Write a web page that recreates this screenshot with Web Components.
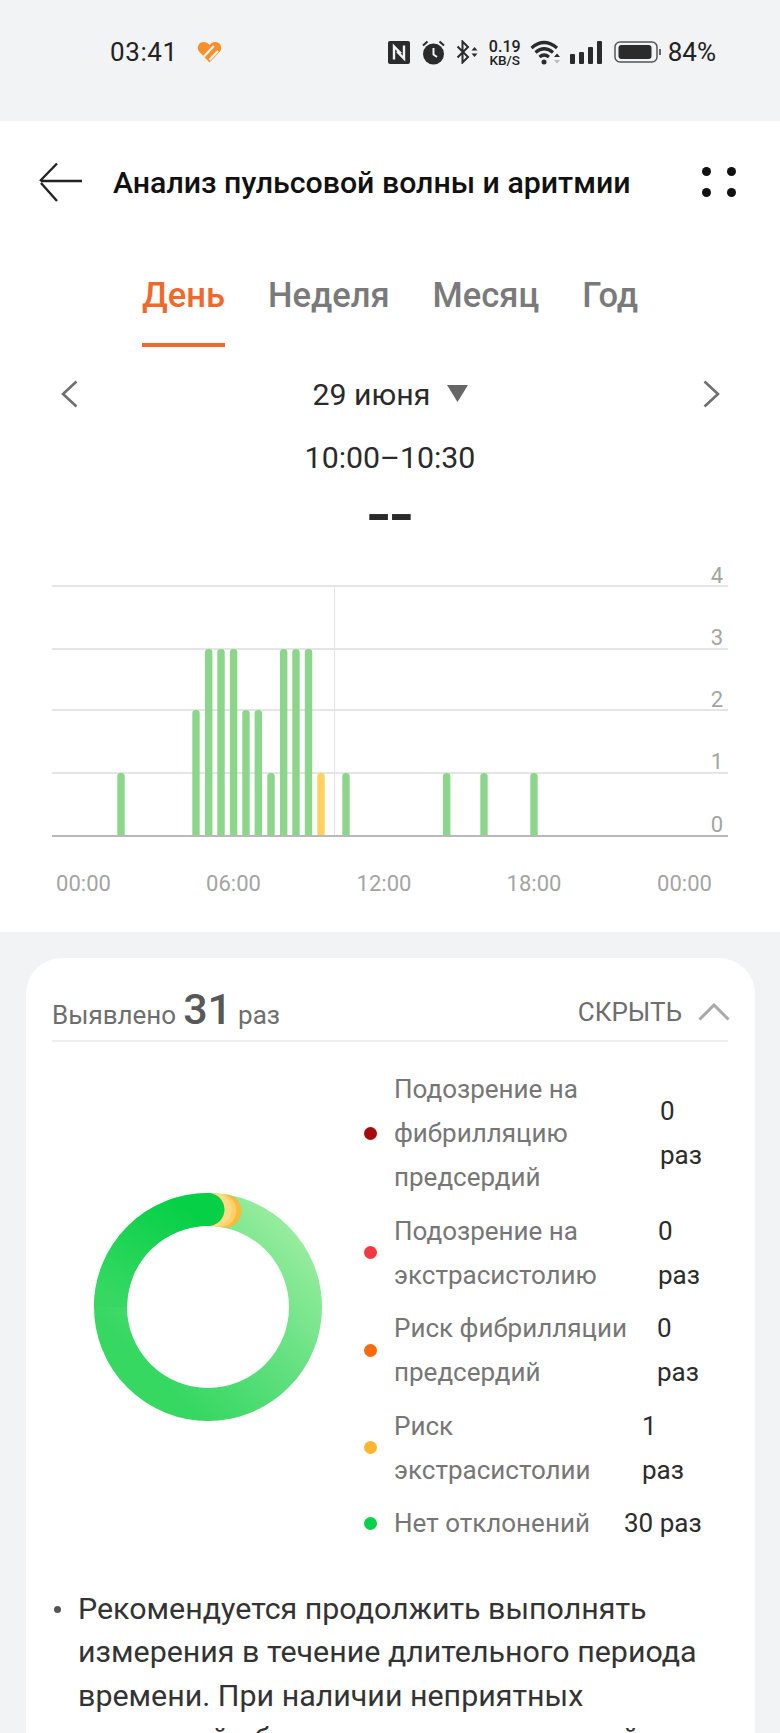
<!DOCTYPE html>
<html lang="ru">
<head>
<meta charset="utf-8">
<title>Анализ пульсовой волны и аритмии</title>
<style>
    html, body{
        margin: 0;
        height: 1733px;
        overflow: hidden;
        background: #f1f3f5;
        font-family: Roboto, "Liberation Sans", sans-serif;
    }
</style>
</head>
<body>
<status-bar></status-bar>
<div style="background:#fff">
    <app-header>Анализ пульсовой волны и аритмии</app-header>
    <period-tabs></period-tabs>
    <date-nav></date-nav>
    <pulse-chart></pulse-chart>
</div>
<result-card>
    <legend-row color="#a80a0a" label="Подозрение на фибрилляцию предсердий" text-width="266" value="0 раз" value-width="42"></legend-row>
    <legend-row color="#f4383f" label="Подозрение на экстрасистолию" text-width="264" value="0 раз" value-width="42"></legend-row>
    <legend-row color="#fb6a0c" label="Риск фибрилляции предсердий" text-width="263" value="0 раз" value-width="42"></legend-row>
    <legend-row color="#fdb62f" label="Риск экстрасистолии" text-width="248" value="1 раз" value-width="42"></legend-row>
    <legend-row color="#0ad14a" label="Нет отклонений" text-width="230" value="30 раз" value-width="90"></legend-row>
    <p slot="advice">Рекомендуется продолжить выполнять измерения в течение длительного периода времени. При наличии неприятных ощущений обратитесь за медицинской помощью.</p>
</result-card>

<script>
class StatusBar extends HTMLElement{
    constructor(){
        super();
        this.attachShadow({mode: 'open'});
        this.shadowRoot.innerHTML = `
            <style>
                :host{
                    display: flex;
                    align-items: center;
                    height: 121px;
                    box-sizing: border-box;
                    padding: 0 64px 17px 110px;
                    background: #f1f3f5;
                    color: #222;
                }
                .time{ font-size: 26px; letter-spacing: .6px; }
                .heart{ margin-left: 19px; }
                .right{ margin-left: auto; display: flex; align-items: center; }
                svg{ display: block; }
                .speed{
                    display: flex;
                    flex-direction: column;
                    align-items: center;
                    width: 32px;
                    margin: 0 9px 0 10px;
                    font-weight: 500;
                }
                .speed b{ font-size: 16px; font-weight: 500; line-height: 15px; }
                .speed i{ font-size: 13.500px; font-style: normal; line-height: 12px; }
                .pct{ font-size: 26px; margin-left: 6px; }
            </style>
            <span class="time">03:41</span>
            <svg class="heart" width="25" height="22" viewBox="0 0 25 22">
                <path d="M12.500 21.500 2 10.500C-1 6.500 2 1 6.500 1c2.500 0 4.500 1 6 3 1.500-2 3.500-3 6-3C23 1 26 6.500 23 10.500z" fill="#f7902b"/>
                <path d="M7 15.500 16.800 5M12.500 19 21 10" stroke="#f1f3f5" stroke-width="2.200" fill="none"/>
            </svg>
            <div class="right">
                <svg width="22" height="23" viewBox="0 0 22 23">
                    <rect width="22" height="23" rx="2" fill="#2b2b2b"/>
                    <path d="M6 18.500V5.500l7 7M16 4.500v13l-7-7" stroke="#f1f3f5" stroke-width="2.400" fill="none"/>
                </svg>
                <svg style="margin-left:11px" width="25" height="25" viewBox="0 0 25 25">
                    <circle cx="12.500" cy="14" r="10.500" fill="#2b2b2b"/>
                    <path d="M12.500 8v6.500l3.500 2.500" stroke="#f1f3f5" stroke-width="2" fill="none"/>
                    <path d="M2 5.500 6.500 1.500M23 5.500 18.500 1.500" stroke="#2b2b2b" stroke-width="2" fill="none"/>
                </svg>
                <svg style="margin-left:10px" width="23" height="24" viewBox="0 0 23 24">
                    <path d="M1.500 6.500 12 17l-5.500 5.500v-21L12 7 1.500 17.500" stroke="#2b2b2b" stroke-width="2" fill="none"/>
                    <path d="M15.500 10.500 18.500 7l3 3.500zM15.500 13.500l3 3.500 3-3.500z" fill="#2b2b2b"/>
                </svg>
                <div class="speed"><b>0.19</b><i>KB/S</i></div>
                <svg width="31" height="26" viewBox="0 0 31 26">
                    <path d="M1.500 9Q14-2 27 9M5.500 13.500Q14 6 23 13.500M9.500 18Q14 14 19 18" stroke="#2b2b2b" stroke-width="3.200" fill="none"/>
                    <circle cx="14" cy="23" r="2.500" fill="#2b2b2b"/>
                    <path d="M24 18l3-3.500 3 3.500z" fill="#2b2b2b"/>
                    <path d="M24 21l3 3.500 3-3.500z" fill="#bbb"/>
                </svg>
                <svg style="margin-left:9px" width="32" height="23" viewBox="0 0 32 23">
                    <rect x="0" y="13" width="5" height="10" rx="1" fill="#2b2b2b"/>
                    <rect x="9" y="11" width="5" height="12" rx="1" fill="#2b2b2b"/>
                    <rect x="18" y="6" width="5" height="17" rx="1" fill="#2b2b2b"/>
                    <rect x="27" y="0" width="5" height="23" rx="1" fill="#2b2b2b"/>
                </svg>
                <svg style="margin-left:12px" width="48" height="22" viewBox="0 0 48 22">
                    <rect x="1" y="1" width="42" height="20" rx="5" fill="none" stroke="#555" stroke-width="1.500"/>
                    <rect x="4.500" y="4" width="33" height="14" rx="3" fill="#2b2b2b"/>
                    <path d="M46 8v6" stroke="#666" stroke-width="2"/>
                </svg>
                <span class="pct">84%</span>
            </div>
        `;
    }
}
customElements.define('status-bar', StatusBar);

class AppHeader extends HTMLElement{
    constructor(){
        super();
        this.attachShadow({mode: 'open'});
        this.shadowRoot.innerHTML = `
            <style>
                :host{
                    display: flex;
                    align-items: center;
                    height: 122px;
                    padding: 0 44px 0 38px;
                    color: #111;
                }
                .title{
                    margin-left: 30px;
                    font-size: 30.300px;
                    font-weight: 500;
                    white-space: nowrap;
                }
                .more{
                    margin-left: auto;
                    display: grid;
                    grid-template-columns: 9px 9px;
                    gap: 12px 16px;
                }
                .more i{ width: 9px; height: 9px; border-radius: 50%; background: #111; }
                svg{ display: block; }
            </style>
            <svg width="45" height="40" viewBox="0 0 45 40">
                <path d="M44 19H3M19 1.500 2 19M3 21 19 39" stroke="#222" stroke-width="2.400" fill="none"/>
            </svg>
            <span class="title"><slot></slot></span>
            <div class="more"><i></i><i></i><i></i><i></i></div>
        `;
    }
}
customElements.define('app-header', AppHeader);

class PeriodTabs extends HTMLElement{
    constructor(){
        super();
        this.attachShadow({mode: 'open'});
        this.shadowRoot.innerHTML = `
            <style>
                :host{
                    display: flex;
                    justify-content: center;
                    gap: 43px;
                    height: 104px;
                    font-size: 34.500px;
                    font-weight: 500;
                    color: #7a7a7a;
                }
                .tab{
                    box-sizing: border-box;
                    height: 104px;
                    padding-top: 32px;
                    line-height: 40px;
                }
                .on{
                    color: #f0692c;
                    border-bottom: 4px solid #f0692c;
                }
            </style>
            <div class="tab on">День</div>
            <div class="tab">Неделя</div>
            <div class="tab">Месяц</div>
            <div class="tab">Год</div>
        `;
    }
}
customElements.define('period-tabs', PeriodTabs);

class DateNav extends HTMLElement{
    constructor(){
        super();
        this.attachShadow({mode: 'open'});
        this.shadowRoot.innerHTML = `
            <style>
                :host{
                    display: block;
                    color: #2a2a2a;
                    font-size: 30.300px;
                    text-align: center;
                }
                .row{
                    display: flex;
                    align-items: center;
                    justify-content: space-between;
                    height: 94px;
                    padding: 0 60px 0 61px;
                }
                .date{ display: flex; align-items: center; gap: 17px; }
                .date svg{ margin-top: -1px; }
                .range{ line-height: 34px; height: 34px; }
                .value{
                    height: 85px;
                    line-height: 80px;
                    font-size: 54px;
                    font-weight: 700;
                    color: #2a2a2a;
                    padding-right: 4px;
                    box-sizing: border-box;
                }
                .value span{ display: inline-block; transform: scaleX(1.25); letter-spacing: -3px; }
                svg{ display: block; }
            </style>
            <div class="row">
                <svg width="18" height="28" viewBox="0 0 18 28"><path d="M15.500 1.500 2 14l13.500 12.500" stroke="#6f6f6f" stroke-width="2.600" fill="none"/></svg>
                <div class="date">
                    <span>29 июня</span>
                    <svg width="21" height="17" viewBox="0 0 21 17"><path d="M0 0h21L10.500 17z" fill="#666"/></svg>
                </div>
                <svg width="18" height="28" viewBox="0 0 18 28"><path d="M2.500 1.500 16 14 2.500 26.500" stroke="#6f6f6f" stroke-width="2.600" fill="none"/></svg>
            </div>
            <div class="range">10:00–10:30</div>
            <div class="value"><span>--</span></div>
        `;
    }
}
customElements.define('date-nav', DateNav);

class PulseChart extends HTMLElement{
    constructor(){
        super();
        this.attachShadow({mode: 'open'});

        const gridY = [586, 649, 710, 773];
        // x, valor, color
        const bars = [
            [121,1],[196,2],[208.700,3],[221,3],[233.600,3],[246,2],[258.300,2],[271,1],
            [283.700,3],[296,3],[308.500,3],[321,1,'#fbd35c'],[346,1],[446.700,1],[484,1],[534,1]
        ];
        const top = {1: 773, 2: 710, 3: 649};

        let svg = '';
        gridY.forEach(y => {
            svg += `<line x1="52" x2="728" y1="${y}" y2="${y}" stroke="#dcdcdc" stroke-width="1.500"/>`;
        });
        svg += `<line x1="334.500" x2="334.500" y1="585" y2="836" stroke="#e2e2e2" stroke-width="1"/>`;
        bars.forEach(([x, v, color]) => {
            const t = top[v];
            svg += `<path d="M${x-3.700} 836V${t+3}q0-3 3.700-3t3.700 3V836z" fill="${color || '#8bd68b'}"/>`;
        });
        svg += `<line x1="52" x2="728" y1="836" y2="836" stroke="#b8b8b8" stroke-width="2"/>`;
        ['0','1','2','3','4'].forEach((t, i) => {
            svg += `<text x="723" y="${[832,769,707,645,583][i]}" text-anchor="end" font-size="22">${t}</text>`;
        });
        [[83.500,'00:00'],[233.500,'06:00'],[384,'12:00'],[534,'18:00'],[684.500,'00:00']].forEach(([x, t]) => {
            svg += `<text x="${x}" y="891" text-anchor="middle" font-size="22">${t}</text>`;
        });

        this.shadowRoot.innerHTML = `
            <style>
                :host{ display: block; height: 372px; }
                svg{ display: block; font-family: Roboto, "Liberation Sans", sans-serif; fill: #a4a4a4; }
            </style>
            <svg width="780" height="372" viewBox="0 560 780 372">${svg}</svg>
        `;
    }
}
customElements.define('pulse-chart', PulseChart);

class DonutRing extends HTMLElement{
    constructor(){
        super();
        this.attachShadow({mode: 'open'});
        this.shadowRoot.innerHTML = `
            <style>
                :host{ display: block; width: 230px; height: 230px; }
                svg{ display: block; }
            </style>
            <svg width="230" height="230" viewBox="0 0 230 230">
                <defs>
                    <linearGradient id="g" x1="0.900" y1="0.100" x2="0.200" y2="0.800">
                        <stop offset="0" stop-color="#94ec9c"/>
                        <stop offset="0.500" stop-color="#63e080"/>
                        <stop offset="1" stop-color="#36d862"/>
                    </linearGradient>
                    <linearGradient id="h" x1="0.200" y1="1" x2="0.800" y2="0">
                        <stop offset="0" stop-color="#36d862"/>
                        <stop offset="1" stop-color="#06d046"/>
                    </linearGradient>
                </defs>
                <circle cx="115" cy="115" r="97.500" fill="none" stroke="url(#g)" stroke-width="33"/>
                <circle cx="132" cy="19" r="16.500" fill="#fdb93a"/>
                <circle cx="127" cy="18.500" r="16.500" fill="#fdd06a"/>
                <circle cx="122" cy="17.800" r="16.500" fill="#fddc84"/>
                <path d="M17.500 115A97.500 97.500 0 0 1 115 17.500" fill="none" stroke="url(#h)" stroke-width="33"/>
                <circle cx="115" cy="17.500" r="16.500" fill="#06d046"/>
            </svg>
        `;
    }
}
customElements.define('donut-ring', DonutRing);

class LegendRow extends HTMLElement{
    connectedCallback(){
        if(this.shadowRoot) return;
        this.attachShadow({mode: 'open'});
        this.shadowRoot.innerHTML = `
            <style>
                :host{
                    display: flex;
                    align-items: center;
                    font-size: 26px;
                    line-height: 44px;
                }
                .dot{
                    flex: none;
                    width: 13px;
                    height: 13px;
                    border-radius: 50%;
                    margin-right: 17px;
                }
                .label{ flex: none; color: #767676; }
                .value{ flex: none; color: #2c2c2c; }
            </style>
            <span class="dot" style="background:${this.getAttribute('color')}"></span>
            <span class="label" style="width:${this.getAttribute('text-width')}px">${this.getAttribute('label')}</span>
            <span class="value" style="width:${this.getAttribute('value-width')}px">${this.getAttribute('value')}</span>
        `;
    }
}
customElements.define('legend-row', LegendRow);

class ResultCard extends HTMLElement{
    constructor(){
        super();
        this.attachShadow({mode: 'open'});
        this.shadowRoot.innerHTML = `
            <style>
                :host{
                    display: block;
                    margin: 26px 25px 0 26px;
                    padding: 0 27px 0 26px;
                    background: #fff;
                    border-radius: 36px 36px 0 0;
                    height: 900px;
                }
                .head{
                    display: flex;
                    align-items: baseline;
                    height: 84px;
                    box-sizing: border-box;
                    padding-top: 26px;
                    border-bottom: 2px solid #eeeeee;
                    color: #6e6e6e;
                    font-size: 26px;
                }
                .count{
                    font-size: 43px;
                    font-weight: 500;
                    color: #585858;
                    margin: 0 6px 0 7px;
                }
                .hide{
                    margin-left: auto;
                    margin-right: -2px;
                    display: flex;
                    align-items: center;
                    align-self: flex-start;
                    gap: 16px;
                    padding-top: 13px;
                    line-height: 30px;
                }
                .hide svg{ display: block; margin-top: -1px; }
                .body{
                    display: flex;
                    align-items: flex-start;
                    margin-top: 25px;
                }
                donut-ring{ margin: 125px 0 0 41px; flex: none; }
                .legend{
                    display: flex;
                    flex-direction: column;
                    margin-left: 41px;
                }
                ::slotted(legend-row){ margin-bottom: 9.600px; }
                .advice{
                    display: flex;
                    margin-top: 32px;
                    color: #333;
                    font-size: 30.400px;
                    line-height: 43.500px;
                }
                .bullet{
                    flex: none;
                    width: 7px;
                    height: 7px;
                    border-radius: 50%;
                    background: #555;
                    margin: 19px 17px 0 2px;
                }
                ::slotted(p){ margin: 0; }
            </style>
            <div class="head">
                <span>Выявлено</span><span class="count">31</span><span>раз</span>
                <div class="hide">
                    <span>СКРЫТЬ</span>
                    <svg width="32" height="18" viewBox="0 0 32 18"><path d="M1.500 16.500 16 2l14.500 14.500" stroke="#a9a9a9" stroke-width="3" fill="none"/></svg>
                </div>
            </div>
            <div class="body">
                <donut-ring></donut-ring>
                <div class="legend"><slot></slot></div>
            </div>
            <div class="advice">
                <span class="bullet"></span>
                <slot name="advice"></slot>
            </div>
        `;
    }
}
customElements.define('result-card', ResultCard);
</script>
</body>
</html>
